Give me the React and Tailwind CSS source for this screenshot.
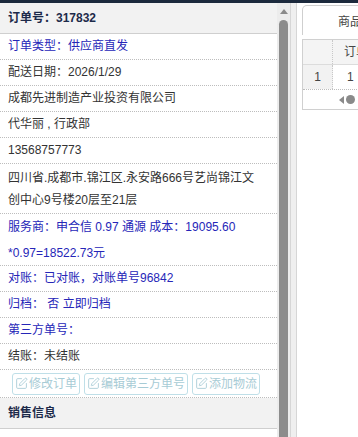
import React from 'react';
import { SquarePen } from 'lucide-react';

const rows = [
    { text: '订单类型：供应商直发', blue: true },
    { text: '配送日期：2026/1/29' },
    { text: '成都先进制造产业投资有限公司' },
    { text: '代华丽 , 行政部' },
    { text: '13568757773' },
];

function Row({ children, blue, className = '' }) {
    return (
        <div
            className={`px-2 border-b border-dotted border-[#bdbdbd] ${
                blue ? 'text-[#2626b8]' : 'text-[#333]'
            } ${className}`}
        >
            {children}
        </div>
    );
}

function ActionButton({ label }) {
    return (
        <button className="h-[22px] flex items-center gap-[1px] px-[2px] border border-[#bfdfe8] rounded-[3px] text-[#a7cbd5] bg-white">
            <SquarePen size={13} strokeWidth={1.6} />
            <span>{label}</span>
        </button>
    );
}

export default function App() {
    return (
        <div className="w-[358px] h-[437px] overflow-hidden bg-white flex flex-col text-[12px] font-['Liberation_Sans','Noto_Sans_CJK_SC',sans-serif]">
            <div className="h-[3px] shrink-0 bg-[#1c2a3d]" />
            <div className="flex flex-1 min-h-0">
                {/* order detail panel */}
                <div className="w-[277px] shrink-0 flex flex-col overflow-hidden">
                    <div className="h-[31px] shrink-0 flex items-center px-2 bg-[#f2f2f2] border-b border-[#cfcfcf] font-bold text-[#1d2a4a]">
                        订单号：317832
                    </div>
                    {rows.map((r) => (
                        <Row key={r.text} blue={r.blue} className="h-[26px] leading-[25px] shrink-0">
                            {r.text}
                        </Row>
                    ))}
                    <Row className="h-[50px] shrink-0 pt-[3px] leading-[22px]">
                        <div>四川省.成都市.锦江区.永安路666号艺尚锦江文</div>
                        <div>创中心9号楼20层至21层</div>
                    </Row>
                    <Row blue className="h-[52px] shrink-0 leading-[26px]">
                        <div>服务商：申合信 0.97 通源 成本：19095.60</div>
                        <div>*0.97=18522.73元</div>
                    </Row>
                    <Row blue className="h-[26px] leading-[25px] shrink-0">
                        对账：已对账，对账单号96842
                    </Row>
                    <Row blue className="h-[26px] leading-[25px] shrink-0">
                        归档：&nbsp;否 立即归档
                    </Row>
                    <Row blue className="h-[26px] leading-[25px] shrink-0">
                        第三方单号：
                    </Row>
                    <Row className="h-[26px] leading-[25px] shrink-0">结账：未结账</Row>
                    <div className="h-[28px] shrink-0 flex items-center gap-1 pl-3 border-b border-dotted border-[#bdbdbd]">
                        <ActionButton label="修改订单" />
                        <ActionButton label="编辑第三方单号" />
                        <ActionButton label="添加物流" />
                    </div>
                    <div className="h-[31px] shrink-0 flex items-center px-2 bg-[#f2f2f2] border-b border-[#cfcfcf] font-bold text-[#1d2a4a]">
                        销售信息
                    </div>
                    <Row className="h-[26px] leading-[30px] shrink-0">销售员：</Row>
                </div>

                {/* vertical scrollbar */}
                <div className="w-[13px] shrink-0 bg-[#ececec] flex flex-col items-center pt-[6px]">
                    <div className="w-0 h-0 border-l-[4px] border-r-[4px] border-b-[5px] border-l-transparent border-r-transparent border-b-[#8a8a8a]" />
                    <div className="mt-[6px] w-[9px] flex-1 rounded-t-[5px] bg-[#8c8c8c]" />
                </div>

                <div className="w-[7px] shrink-0 bg-[#efefef] border-l border-r border-[#d6d6d6]" />

                {/* goods panel */}
                <div className="flex-1 min-w-0 pl-[5px] pt-[2px] overflow-hidden">
                    <div className="flex h-[30px]">
                        <div className="w-[1px]" />
                        <div className="flex-1 border border-b-0 border-[#cfcfcf] rounded-tl-[5px] bg-white pl-[35px] pt-[7px] text-[#444] whitespace-nowrap">
                            商品明细
                        </div>
                    </div>
                    <div className="mt-[4px] border border-[#d0d0d0] w-[80px]">
                        <div className="flex h-[25px] bg-[#f4f4f4] border-b border-[#dcdcdc]">
                            <div className="w-[30px] shrink-0 border-r border-dotted border-[#c8c8c8]" />
                            <div className="pl-[11px] leading-[25px] text-[#444] whitespace-nowrap">订单号</div>
                        </div>
                        <div className="flex h-[25px] border-b border-dotted border-[#bdbdbd]">
                            <div className="w-[30px] shrink-0 bg-[#f2f2f2] border-r border-dotted border-[#c8c8c8] text-center leading-[24px] text-[#444]">
                                1
                            </div>
                            <div className="pl-[14px] leading-[24px] text-[#444]">1</div>
                        </div>
                        <div className="h-[19px] flex items-center pl-[36px] gap-[2px] text-[#8a8a8a]">
                            <div className="w-0 h-0 border-t-[4px] border-b-[4px] border-r-[5px] border-t-transparent border-b-transparent border-r-[#8a8a8a]" />
                            <div className="w-[9px] h-[9px] rounded-full bg-[#8a8a8a]" />
                        </div>
                    </div>
                </div>
            </div>
        </div>
    );
}
